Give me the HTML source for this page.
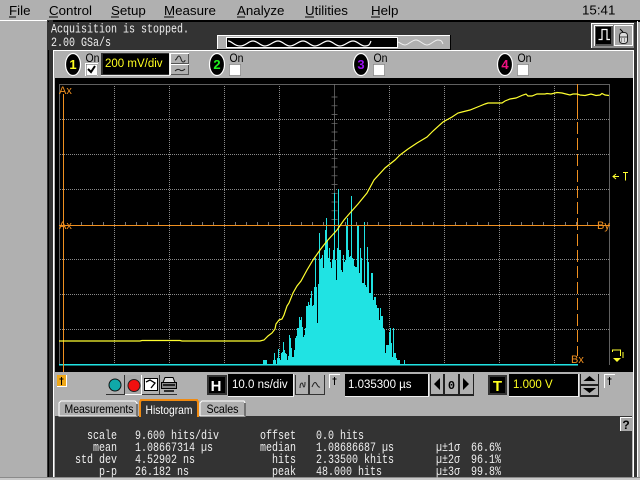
<!DOCTYPE html>
<html><head><meta charset="utf-8"><title>Scope</title>
<style>
html,body{margin:0;padding:0;background:#b0b0b0;width:640px;height:480px;overflow:hidden}
svg{display:block}
.m{font:13.33px "Liberation Sans",sans-serif;fill:#000}
.u{font:12px "Liberation Sans",sans-serif;fill:#000}
.r{font:11.5px "Liberation Sans",sans-serif}
.t{font:12.5px "Liberation Mono",monospace;fill:#eee}
.e{text-anchor:end}
.o{font:11px "Liberation Sans",sans-serif;fill:#f09020}
</style></head><body>
<svg width="640" height="480" viewBox="0 0 640 480" xmlns="http://www.w3.org/2000/svg">
<rect width="640" height="480" fill="#b0b0b0"/>
<!-- shell -->
<g shape-rendering="crispEdges">
<rect x="0" y="20" width="47" height="1" fill="#fff"/>
<rect x="48" y="20" width="592" height="2" fill="#000"/>
<rect x="47" y="20" width="6" height="460" fill="#333"/>
<rect x="48" y="21" width="1" height="459" fill="#000"/>
<rect x="48" y="22" width="589" height="28" fill="#333"/>
<rect x="634" y="22" width="3" height="458" fill="#333"/>
<rect x="637" y="21" width="1" height="459" fill="#fff"/>
<rect x="53" y="50" width="581" height="1" fill="#fff"/>
<rect x="53" y="50" width="1" height="430" fill="#fff"/>
<rect x="54" y="51" width="580" height="429" fill="#b0b0b0"/>
<rect x="55" y="78" width="578" height="294" fill="#000"/>
<rect x="633" y="51" width="1" height="429" fill="#fff"/>
<rect x="55" y="416" width="577" height="61" fill="#333"/>
<rect x="0" y="477" width="640" height="1" fill="#8a8a8a"/>
<rect x="0" y="478" width="640" height="2" fill="#c8c8c8"/>
</g>
<!-- menu -->
<text class="m" x="9" y="15">File</text><path d="M9 17h7" stroke="#000"/>
<text class="m" x="49" y="15">Control</text><path d="M49 17h9" stroke="#000"/>
<text class="m" x="111" y="15">Setup</text><path d="M111 17h8" stroke="#000"/>
<text class="m" x="164" y="15">Measure</text><path d="M164 17h10" stroke="#000"/>
<text class="m" x="237" y="15">Analyze</text><path d="M237 17h8" stroke="#000"/>
<text class="m" x="305" y="15">Utilities</text><path d="M305 17h9" stroke="#000"/>
<text class="m" x="371" y="15">Help</text><path d="M371 17h9" stroke="#000"/>
<text class="m" x="582" y="14.5">15:41</text>
<!-- status -->
<text class="t" x="51" y="32.5" textLength="138" lengthAdjust="spacingAndGlyphs">Acquisition is stopped.</text>
<text class="t" x="51" y="46" textLength="60" lengthAdjust="spacingAndGlyphs">2.00 GSa/s</text>
<!-- sampling bar -->
<g shape-rendering="crispEdges">
<rect x="217" y="35" width="234" height="15" fill="#000"/>
<rect x="217" y="35" width="233" height="14" fill="#fff"/>
<rect x="218" y="36" width="232" height="13" fill="#b0b0b0"/>
<rect x="226" y="37" width="172" height="11" fill="#fff"/>
<rect x="227" y="38" width="170" height="9" fill="#000"/>
</g>
<path d="M228 41c4 0 6 5 12 5s8-5 13-5 7 5 12 5 8-5 13-5 7 5 12 5 8-5 13-5 7 5 12 5 8-5 13-5 7 5 12 5 8-5 13-5 7 5 12 5 5-3 6-5" fill="none" stroke="#fff" stroke-width="1.200"/>
<path d="M398 42c3 1 4 3 7 3s7-5 11-5 7 5 11 5 7-5 11-5 4 2 5 4" fill="none" stroke="#eee" stroke-width="1"/>
<!-- top-right buttons -->
<g shape-rendering="crispEdges">
<rect x="591" y="23" width="43" height="25" fill="#fff"/>
<rect x="592" y="24" width="42" height="24" fill="#8c8c8c"/>
<rect x="594" y="25" width="19" height="21" fill="#fff"/>
<rect x="595" y="26" width="18" height="20" fill="#555"/>
<rect x="596" y="27" width="15" height="17" fill="#000"/>
<rect x="614" y="25" width="19" height="21" fill="#fff"/>
<rect x="615" y="26" width="17" height="19" fill="#a8a8a8"/>
</g>
<path d="M598.500 39.500h3.500v-10h5v10h3" fill="none" stroke="#fff" stroke-width="1.200"/>
<path d="M620 29l3 3" stroke="#000"/>
<rect x="619.500" y="32.500" width="8" height="11" rx="3" fill="#ddd" stroke="#222"/>
<path d="M620 37h7M621 39h1m2 0h1m-4 2h1m2 0h1" stroke="#444"/>
<!-- channel 1 -->
<ellipse cx="73" cy="64.500" rx="7.500" ry="11" fill="#000" stroke="#fff" stroke-width="1.200"/>
<text class="r" x="73" y="69" text-anchor="middle" style="font-size:13px;font-weight:bold;fill:#ffff20">1</text>
<text class="u" x="85.500" y="62" textLength="14" lengthAdjust="spacingAndGlyphs">On</text>
<g shape-rendering="crispEdges">
<rect x="85" y="63" width="13" height="13" fill="#fff"/><rect x="86" y="64" width="11" height="11" fill="#fff" stroke="#555" stroke-width=".5"/>
<rect x="101" y="53" width="69" height="23" fill="#eee"/><rect x="101" y="53" width="68" height="22" fill="#333"/><rect x="103" y="54" width="66" height="20" fill="#000"/>
<rect x="170" y="53" width="19" height="11" fill="#fff"/><rect x="171" y="54" width="18" height="10" fill="#555"/><rect x="171" y="54" width="17" height="9" fill="#b0b0b0"/>
<rect x="170" y="64" width="19" height="11" fill="#fff"/><rect x="171" y="65" width="18" height="10" fill="#555"/><rect x="171" y="65" width="17" height="9" fill="#b0b0b0"/>
</g>
<path d="M88 69l3 3 4-6" fill="none" stroke="#000" stroke-width="2"/>
<text class="r" x="105" y="67" style="fill:#ffff20">200 mV/div</text>
<path d="M175 60c2 0 2-4 4-4s2 6 4 6 2-2 2-2M175 71c2-2 4-2 5-1s3 1 5-1" fill="none" stroke="#222"/>
<!-- channel 2 -->
<ellipse cx="217" cy="64.500" rx="7.500" ry="11" fill="#000" stroke="#fff" stroke-width="1.200"/>
<text class="r" x="217" y="69" text-anchor="middle" style="font-size:13px;font-weight:bold;fill:#20f020">2</text>
<text class="u" x="229.500" y="62" textLength="14" lengthAdjust="spacingAndGlyphs">On</text>
<rect x="229.500" y="64.500" width="11" height="11" fill="#fff" stroke="#777" stroke-width=".6"/>
<!-- channel 3 -->
<ellipse cx="361" cy="64.500" rx="7.500" ry="11" fill="#000" stroke="#fff" stroke-width="1.200"/>
<text class="r" x="361" y="69" text-anchor="middle" style="font-size:13px;font-weight:bold;fill:#9a10f0">3</text>
<text class="u" x="373.500" y="62" textLength="14" lengthAdjust="spacingAndGlyphs">On</text>
<rect x="373.500" y="64.500" width="11" height="11" fill="#fff" stroke="#777" stroke-width=".6"/>
<!-- channel 4 -->
<ellipse cx="505" cy="64.500" rx="7.500" ry="11" fill="#000" stroke="#fff" stroke-width="1.200"/>
<text class="r" x="505" y="69" text-anchor="middle" style="font-size:13px;font-weight:bold;fill:#f01080">4</text>
<text class="u" x="517.500" y="62" textLength="14" lengthAdjust="spacingAndGlyphs">On</text>
<rect x="517.500" y="64.500" width="11" height="11" fill="#fff" stroke="#777" stroke-width=".6"/>
<!-- plot -->
<path d="M114.500 84V365M169.500 84V365M224.500 84V365M279.500 84V365M389.500 84V365M444.500 84V365M499.500 84V365M554.500 84V365M60 119.500H609M60 154.500H609M60 189.500H609M60 259.500H609M60 294.500H609M60 329.500H609" stroke="#8a8a8a" stroke-dasharray="1 1" fill="none" shape-rendering="crispEdges"/>
<path d="M59.500 365V84.500H609.500V365" fill="none" stroke="#606060" shape-rendering="crispEdges"/>
<path d="M334.500 88v4M331.500 97h6M331.500 105.800h6M331.500 114.500h6M331.500 123.300h6M331.500 132h6M331.500 140.800h6M331.500 149.500h6M331.500 158.300h6M331.500 167h6M331.500 175.800h6M331.500 184.500h6M331.500 193.300h6M331.500 202h6M331.500 210.800h6M331.500 219.500h6M334.500 84V365" stroke="#777" fill="none" stroke-width=".7"/>
<path d="M81.500 222v3M92.500 222v3M103.500 222v3M125.500 222v3M136.500 222v3M147.500 222v3M158.500 222v3M180.500 222v3M191.500 222v3M202.500 222v3M213.500 222v3M235.500 222v3M246.500 222v3M257.500 222v3M268.500 222v3M290.500 222v3M301.500 222v3M312.500 222v3M323.500 222v3M345.500 222v3M356.500 222v3M367.500 222v3M378.500 222v3M400.500 222v3M411.500 222v3M422.500 222v3M433.500 222v3M455.500 222v3M466.500 222v3M477.500 222v3M488.500 222v3M510.500 222v3M521.500 222v3M532.500 222v3M543.500 222v3M565.500 222v3M576.500 222v3M587.500 222v3M598.500 222v3" stroke="#777" fill="none" shape-rendering="crispEdges"/>
<!-- histogram -->
<path fill="#20e3e3" shape-rendering="crispEdges" d="M263 365V360h4V365h6V360h1V353h1V360h1V365h1V358h1V349h1V358h1V360h1V353h1V352h1V342h1V350h1V353h1V354h1V360h1V356h1V335h1V338h1V348h1V357h2V350h1V338h1V336h1V328h2V317h1V320h1V317h1V327h1V337h1V335h1V328h1V306h2V302h1V305h1V298h1V291h1V306h1V305h1V287h1V258h1V287h1V323h1V284h1V233h1V259h1V258h1V255h1V268h1V250h1V230h1V218h1V240h1V258h1V248h1V262h1V268h1V260h1V250h1V193h1V260h1V280h1V248h1V189h1V250h2V270h1V272h1V255h1V262h1V260h1V225h1V218h1V250h1V257h1V256h1V196h1V258h1V259h1V266h1V267h2V226h2V273h1V248h1V258h1V283h2V222h1V285h1V287h1V247h1V262h1V293h2V273h2V300h1V297h2V305h1V308h2V320h1V308h1V316h2V328h1V330h1V353h1V345h3V332h1V328h1V343h1V357h1V328h1V353h2V358h1V360h3V365h4V360h1V365z"/>
<path d="M59 364.500H578" stroke="#20e3e3" stroke-width="1.500" shape-rendering="crispEdges"/>
<!-- cursors -->
<path d="M59 225.500H610M63.500 94V372" stroke="#f09020" fill="none" stroke-width="1" shape-rendering="crispEdges"/>
<path d="M577.500 84V119M577.500 122V134M577.500 138V150M577.500 154V166M577.500 170V182M577.500 186V198M577.500 202V214M577.500 218V230M577.500 234V246M577.500 250V262M577.500 266V278M577.500 282V294M577.500 298V310M577.500 314V326M577.500 330V342M577.500 346V356" stroke="#f09020" fill="none" shape-rendering="crispEdges"/>
<text class="o" x="59" y="94">Ax</text>
<text class="o" x="59" y="229">Ax</text>
<text class="o" x="597" y="229">By</text>
<text class="o" x="571" y="363">Bx</text>
<!-- trace -->
<path fill="none" stroke="#ffff30" stroke-width="1.200" d="M59 341H140L142 340.500H180L182 341H260L264 340L268 336L272 333L275 329L276 324L279 320L282 319L284 315L287 306L289 303L293 293L297 286L301 281L307 270L313 260L320 250L327 241L337 230L344 220L350 213L358 204L367 193L374 180L385 168L395 160L400 155L408 149L417 143L427 137L433 131L443 122L452 117L458 113L462 112L470 110L480 106L485 104L488 103L502 103L505 101L510 99L516 98L523 95L526 94L528 96L532 96L537 94L545 94L547 93.500L551 94L557 92.500L562 93L570 95L573 94L577 94L580 95L585 95.500L591 94L596 95.500L600 95L602 93.500L605 95L609 95.500"/>
<!-- T marker -->
<path d="M619 176.500h-6m3-2.500l-3 2.500 3 2.500" fill="none" stroke="#ffff30"/>
<path d="M623 172.500h5M625.500 172.500v8" stroke="#ffff30" fill="none" shape-rendering="crispEdges"/>
<!-- bottom right marker -->
<path d="M612.500 352v-2l3 0h5v6M623 352v6" stroke="#ffff30" fill="none"/>
<path d="M613 358h8l-4 4z" fill="#ffff30"/>
<!-- toolbar -->
<g shape-rendering="crispEdges">
<rect x="57" y="375" width="10" height="12" fill="#fff"/><rect x="57" y="375" width="9" height="11" fill="#f0a818"/>
<rect x="106" y="375" width="71" height="20" fill="#333"/>
<rect x="106" y="375" width="18" height="19" fill="#b0b0b0"/>
<rect x="125" y="375" width="17" height="20" fill="#fff"/><rect x="125" y="375" width="16" height="19" fill="#a8a8a8"/>
<rect x="142" y="375" width="17" height="19" fill="#b0b0b0"/>
<rect x="160" y="375" width="17" height="19" fill="#b0b0b0"/>
<rect x="207" y="375" width="20" height="20" fill="#333"/><rect x="209" y="377" width="16" height="16" fill="#000"/>
<rect x="228" y="374" width="66" height="23" fill="#eee"/><rect x="228" y="374" width="65" height="22" fill="#000"/>
<rect x="295" y="375" width="14" height="20" fill="#333"/><rect x="296" y="375" width="12" height="19" fill="#b0b0b0"/>
<rect x="309" y="375" width="16" height="20" fill="#333"/><rect x="310" y="375" width="14" height="19" fill="#b0b0b0"/>
<rect x="329" y="374" width="11" height="14" fill="#fff"/><rect x="330" y="375" width="10" height="13" fill="#b0b0b0"/>
<rect x="345" y="374" width="84" height="23" fill="#eee"/><rect x="345" y="374" width="83" height="22" fill="#000"/>
<rect x="430" y="374" width="44" height="22" fill="#222"/>
<rect x="431" y="374" width="12" height="20" fill="#b0b0b0"/><rect x="445" y="374" width="13" height="20" fill="#b0b0b0"/><rect x="460" y="374" width="13" height="20" fill="#b0b0b0"/>
<rect x="488" y="375" width="19" height="20" fill="#333"/><rect x="490" y="377" width="15" height="16" fill="#000"/>
<rect x="509" y="374" width="70" height="23" fill="#eee"/><rect x="509" y="374" width="69" height="22" fill="#000"/>
<rect x="580" y="374" width="19" height="23" fill="#222"/>
<rect x="581" y="374" width="17" height="10" fill="#b0b0b0"/><rect x="581" y="386" width="17" height="9" fill="#b0b0b0"/>
<rect x="604" y="374" width="11" height="14" fill="#fff"/><rect x="605" y="375" width="10" height="13" fill="#b0b0b0"/>
</g>
<path d="M61.500 385v-8M59.500 379h4M334.500 385v-8M332.500 379h4M609.500 385v-8M607.500 379h4" stroke="#000" stroke-width="1.400" fill="none" shape-rendering="crispEdges"/>
<circle cx="115" cy="385" r="6" fill="#10a8a8" stroke="#111"/>
<circle cx="134" cy="385.500" r="6" fill="#f01010" stroke="#222"/>
<rect x="144.500" y="378.500" width="13" height="12" fill="#fff" stroke="#000"/>
<path d="M146 380h10v4l-4 5h-6z" fill="#fff" stroke="none"/>
<path d="M146 382l4-2 5 3-4 5" fill="none" stroke="#000" stroke-width="1.300"/>
<path d="M165 377.500h8l2 5h-12z" fill="#ddd" stroke="#000"/>
<rect x="161.500" y="382.500" width="15" height="6" fill="#888" stroke="#000"/>
<path d="M163 385h12M164 391h10" stroke="#000" stroke-width="1.500"/>
<text x="216" y="391" text-anchor="middle" style="font:bold 15px 'Liberation Sans',sans-serif;fill:#fff">H</text>
<text class="r" x="232" y="388" style="fill:#fff">10.0 ns/div</text>
<path d="M300 388c0-4 1-5 2-5s1 4 2 4 1-5 1-5M312 387c2-5 3-5 4-4s2 5 4 4" fill="none" stroke="#222"/>
<text class="r" x="348" y="388" style="fill:#fff">1.035300 µs</text>
<path d="M440 378v12l-6-6zM463 378v12l6-6z" fill="#000"/>
<text x="451.500" y="389" text-anchor="middle" style="font:bold 12px 'Liberation Mono',monospace;fill:#000">0</text>
<text x="497.500" y="391" text-anchor="middle" style="font:bold 15px 'Liberation Sans',sans-serif;fill:#ffff20">T</text>
<text class="r" x="513" y="388" style="fill:#ffff20">1.000 V</text>
<path d="M589.500 376l6 5h-12zM583 388h13l-6.500 5z" fill="#000"/>
<!-- tabs -->
<path d="M59 416v-13l2-2h74l2 2v13z" fill="#b0b0b0" stroke="#fff"/>
<path d="M137 404v12" stroke="#333"/>
<path d="M200 416v-13l2-2h42l1 2v13z" fill="#b0b0b0" stroke="#fff"/>
<path d="M245 403v13" stroke="#333"/>
<text class="u" x="64.500" y="413" textLength="69" lengthAdjust="spacingAndGlyphs">Measurements</text>
<text class="u" x="206.500" y="413" textLength="32" lengthAdjust="spacingAndGlyphs">Scales</text>
<path d="M140 417v-15l1-2h56l1 2v15" fill="#333" stroke="#f08a10" stroke-width="2"/>
<text class="u" x="145.500" y="414" style="fill:#fff" textLength="47" lengthAdjust="spacingAndGlyphs">Histogram</text>
<!-- help -->
<g shape-rendering="crispEdges"><rect x="620" y="417" width="12" height="14" fill="#fff"/><rect x="621" y="418" width="11" height="13" fill="#a8a8a8"/></g>
<text x="626" y="429" text-anchor="middle" style="font:bold 12px 'Liberation Sans',sans-serif;fill:#000">?</text>
<!-- stats -->
<g lengthAdjust="spacingAndGlyphs">
<text class="t e" x="117" y="439" textLength="30" lengthAdjust="spacingAndGlyphs">scale</text><text class="t" x="135" y="439" textLength="84" lengthAdjust="spacingAndGlyphs">9.600 hits/div</text>
<text class="t e" x="117" y="451" textLength="24" lengthAdjust="spacingAndGlyphs">mean</text><text class="t" x="135" y="451" textLength="78" lengthAdjust="spacingAndGlyphs">1.08667314 µs</text>
<text class="t e" x="117" y="463" textLength="42" lengthAdjust="spacingAndGlyphs">std dev</text><text class="t" x="135" y="463" textLength="60" lengthAdjust="spacingAndGlyphs">4.52902 ns</text>
<text class="t e" x="117" y="475" textLength="18" lengthAdjust="spacingAndGlyphs">p-p</text><text class="t" x="135" y="475" textLength="54" lengthAdjust="spacingAndGlyphs">26.182 ns</text>
<text class="t e" x="296" y="439" textLength="36" lengthAdjust="spacingAndGlyphs">offset</text><text class="t" x="316" y="439" textLength="48" lengthAdjust="spacingAndGlyphs">0.0 hits</text>
<text class="t e" x="296" y="451" textLength="36" lengthAdjust="spacingAndGlyphs">median</text><text class="t" x="316" y="451" textLength="78" lengthAdjust="spacingAndGlyphs">1.08686687 µs</text>
<text class="t e" x="296" y="463" textLength="24" lengthAdjust="spacingAndGlyphs">hits</text><text class="t" x="316" y="463" textLength="78" lengthAdjust="spacingAndGlyphs">2.33500 khits</text>
<text class="t e" x="296" y="475" textLength="24" lengthAdjust="spacingAndGlyphs">peak</text><text class="t" x="316" y="475" textLength="66" lengthAdjust="spacingAndGlyphs">48.000 hits</text>
<text class="t" x="436" y="451" textLength="24" lengthAdjust="spacingAndGlyphs">µ±1σ</text><text class="t" x="471" y="451" textLength="30" lengthAdjust="spacingAndGlyphs">66.6%</text>
<text class="t" x="436" y="463" textLength="24" lengthAdjust="spacingAndGlyphs">µ±2σ</text><text class="t" x="471" y="463" textLength="30" lengthAdjust="spacingAndGlyphs">96.1%</text>
<text class="t" x="436" y="475" textLength="24" lengthAdjust="spacingAndGlyphs">µ±3σ</text><text class="t" x="471" y="475" textLength="30" lengthAdjust="spacingAndGlyphs">99.8%</text>
</g>
</svg>
</body></html>
